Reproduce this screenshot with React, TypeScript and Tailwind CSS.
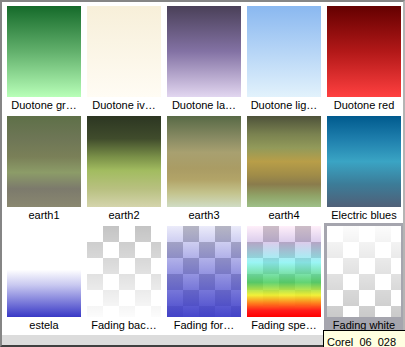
const checker =
  "bg-[repeating-conic-gradient(#c4c4c4_0%_25%,#ffffff_0%_50%)] bg-[length:32px_32px]";

type Swatch = { name: string; label: string; fill: string; checker?: boolean };

const swatches: Swatch[] = [
  { name: "Duotone green", label: "Duotone gr…", fill: "bg-[linear-gradient(#156a2a,#62b06c_50%,#b8ffb8)]" },
  { name: "Duotone ivory", label: "Duotone iv…", fill: "bg-[linear-gradient(#f7efd9,#fffcf4)]" },
  { name: "Duotone lavender", label: "Duotone la…", fill: "bg-[linear-gradient(#4a4058,#8372a4_50%,#e2d6f0)]" },
  { name: "Duotone light blue", label: "Duotone lig…", fill: "bg-[linear-gradient(#8ab8f0,#e2f2fc)]" },
  { name: "Duotone red", label: "Duotone red", fill: "bg-[linear-gradient(#640000,#b21818_50%,#ff4040)]" },
  {
    name: "earth1",
    label: "earth1",
    fill: "bg-[linear-gradient(#5e7048,#6e7656_25%,#7a8058_45%,#8c9c68_62%,#7c7a6c_80%,#8a8870)]",
  },
  {
    name: "earth2",
    label: "earth2",
    fill: "bg-[linear-gradient(#2c3622,#404c2c_25%,#7a9048_45%,#a2bc60_60%,#b8c080_80%,#d4d4ac)]",
  },
  {
    name: "earth3",
    label: "earth3",
    fill: "bg-[linear-gradient(#586a46,#8a8c64_25%,#a8a070_40%,#aa9c64_58%,#b2a468_70%,#c4c48e_85%,#d0dcc4)]",
  },
  {
    name: "earth4",
    label: "earth4",
    fill: "bg-[linear-gradient(#4e523a,#7a8250_20%,#929a5a_35%,#b89e48_50%,#a08c48_65%,#8a7c4c_75%,#90a468_88%,#9ebf88)]",
  },
  {
    name: "Electric blues",
    label: "Electric blues",
    fill: "bg-[linear-gradient(#005a8e,#1e7eac_25%,#3aa4c4_50%,#3c7c98_75%,#506078)]",
  },
  { name: "estela", label: "estela", fill: "bg-[linear-gradient(#ffffff_48%,#c8c8f0_65%,#3838c6)]" },
  {
    name: "Fading background",
    label: "Fading bac…",
    checker: true,
    fill: "bg-[linear-gradient(rgba(255,255,255,0),rgba(255,255,255,0.95))]",
  },
  {
    name: "Fading foreground",
    label: "Fading for…",
    checker: true,
    fill: "bg-[linear-gradient(rgba(60,60,200,0.1),rgba(60,60,200,0.95))]",
  },
  {
    name: "Fading spectrum",
    label: "Fading spe…",
    checker: true,
    fill: "bg-[linear-gradient(rgba(255,150,220,0.15),rgba(150,110,200,0.35)_18%,rgba(100,240,240,0.65)_40%,rgba(60,200,80,0.8)_62%,rgba(240,240,40,0.92)_76%,rgba(255,120,20,0.96)_85%,#ff1a1a_93%,#ff0000)]",
  },
  {
    name: "Fading white",
    label: "Fading white",
    checker: true,
    fill: "bg-[linear-gradient(rgba(255,255,255,0.95),rgba(255,255,255,0.1))]",
  },
];

export default function App() {
  const selected = "Fading white";

  return (
    <div className="relative w-[405px] h-[347px] overflow-hidden font-['Liberation_Sans',Arial,sans-serif] text-[11px] text-black">
      <div className="h-full bg-white border-2 border-t-[#858585] border-l-[#858585] border-r-[#b4b4b4] border-b-[#404040]">
        <div className="h-[333px] overflow-hidden pl-[2px] pt-[1px]">
          <div className="grid grid-cols-[repeat(5,80px)]">
            {swatches.map((s) => (
              <div
                key={s.name}
                title={s.name}
                className={s.name === selected ? "h-[110px] p-[3px] bg-[#a5a5ae]" : "h-[110px] p-[3px]"}
              >
                <div className={s.checker ? `h-[91px] ${checker}` : "h-[91px]"}>
                  <div className={`h-full ${s.fill}`} />
                </div>
                <div className="h-[16px] leading-[16px] px-[2px] truncate text-center">{s.label}</div>
              </div>
            ))}
          </div>
        </div>
        <div className="h-[10px] bg-[#dcdcdc]" />
      </div>

      {/* tooltip for the hovered swatch */}
      <div className="absolute left-[323px] top-[330px] w-[84px] h-[22px] border border-black bg-[#ffffe1] px-[3px] pt-[3px] leading-[16px] whitespace-nowrap">
        Corel_06_028
      </div>
    </div>
  );
}
